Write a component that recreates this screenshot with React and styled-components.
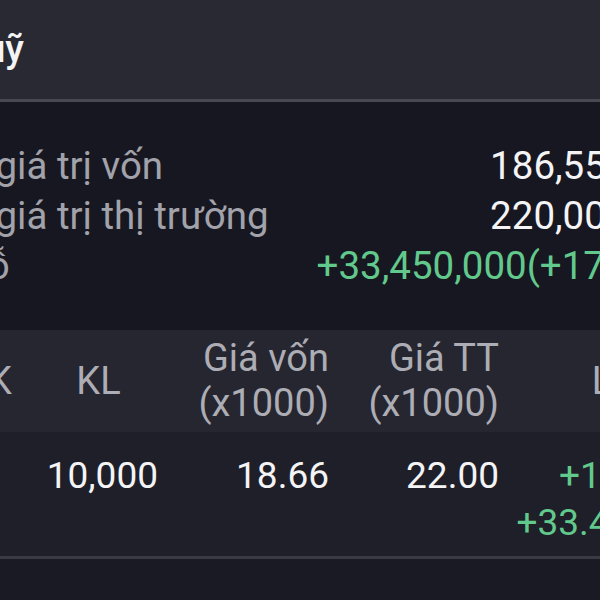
import React from "react";
import styled, { createGlobalStyle } from "styled-components";

const GlobalStyle = createGlobalStyle`
  html, body { margin: 0; padding: 0; background: #1a1a24; }
  body { font-family: Roboto, "Noto Sans", "Liberation Sans", sans-serif; }
`;

const Screen = styled.div`
  width: 600px;
  height: 600px;
  overflow: hidden;
  background: #1a1a24;
`;

const Canvas = styled.div`
  margin-left: -100px;
  width: 830px;
  display: flex;
  flex-direction: column;
`;

const TopBar = styled.header`
  height: 99px;
  border-bottom: 3px solid #484852;
  background: #292933;
  display: flex;
  align-items: center;
  gap: 18px;
  padding-right: 30px;
`;

const BackButton = styled.span`
  width: 40px;
  height: 40px;
  display: flex;
  align-items: center;
  justify-content: center;
  color: #ffffff;
`;

const Title = styled.h1`
  margin: 0;
  font-size: 38px;
  line-height: 1.172;
  font-weight: 500;
  color: #f4f4f6;
`;

const Summary = styled.section`
  background: #171721;
  padding: 39px 30px 39px 0;
  display: flex;
  flex-direction: column;
`;

const SummaryRow = styled.div`
  display: flex;
  justify-content: space-between;
  align-items: baseline;
  font-size: 38.5px;
  line-height: 50px;
  white-space: nowrap;
`;

const Label = styled.span`
  color: #a2a2ab;
`;

const Value = styled.span`
  color: ${(p) => (p.$up ? "#62c98c" : "#f4f4f6")};
`;

const TableRow = styled.div`
  display: grid;
  grid-template-columns: 130px 128px 171px 170px 201px;
  padding-right: 30px;
  white-space: nowrap;
`;

const HeadRow = styled(TableRow)`
  height: 102px;
  align-items: center;
  background: #262630;
  font-size: 38px;
  line-height: 45px;
  color: #adadb5;
`;

const HeadCell = styled.div`
  text-align: ${(p) => p.$align || "right"};
  padding-left: ${(p) => p.$pl || 0}px;
`;

const DataRow = styled(TableRow)`
  align-items: start;
  background: #1f1f29;
  padding-top: 20px;
  padding-bottom: 10px;
  border-bottom: 3px solid #3a3a44;
  font-size: 37px;
  line-height: 47px;
  color: #f4f4f6;
`;

const DataCell = styled.div`
  display: flex;
  flex-direction: column;
  align-items: ${(p) => (p.$align === "left" ? "flex-start" : "flex-end")};
  color: ${(p) => (p.$up ? "#62c98c" : "inherit")};
`;

export default function App() {
  return (
    <>
      <GlobalStyle />
      <Screen>
        <Canvas>
          <TopBar>
            <BackButton>
              <svg width="28" height="28" viewBox="0 0 24 24" fill="none" stroke="currentColor" strokeWidth="2.4" strokeLinecap="round" strokeLinejoin="round">
                <path d="M15 5l-7 7 7 7" />
              </svg>
            </BackButton>
            <Title>Quỹ</Title>
          </TopBar>

          <Summary>
            <SummaryRow>
              <Label>Tổng giá trị vốn</Label>
              <Value>186,550,000</Value>
            </SummaryRow>
            <SummaryRow>
              <Label>Tổng giá trị thị trường</Label>
              <Value>220,000,000</Value>
            </SummaryRow>
            <SummaryRow>
              <Label>Lãi/Lỗ</Label>
              <Value $up>+33,450,000(+17.93%)</Value>
            </SummaryRow>
          </Summary>

          <HeadRow>
            <HeadCell $align="left">Mã CK</HeadCell>
            <HeadCell $align="center" $pl={9}>KL</HeadCell>
            <HeadCell>
              Giá vốn
              <br />
              (x1000)
            </HeadCell>
            <HeadCell>
              Giá TT
              <br />
              (x1000)
            </HeadCell>
            <HeadCell>Lãi/Lỗ</HeadCell>
          </HeadRow>

          <DataRow>
            <DataCell $align="left">VFF</DataCell>
            <DataCell>10,000</DataCell>
            <DataCell>18.66</DataCell>
            <DataCell>22.00</DataCell>
            <DataCell $up>
              <span>+17.93%</span>
              <span>+33.450,00</span>
            </DataCell>
          </DataRow>
        </Canvas>
      </Screen>
    </>
  );
}
